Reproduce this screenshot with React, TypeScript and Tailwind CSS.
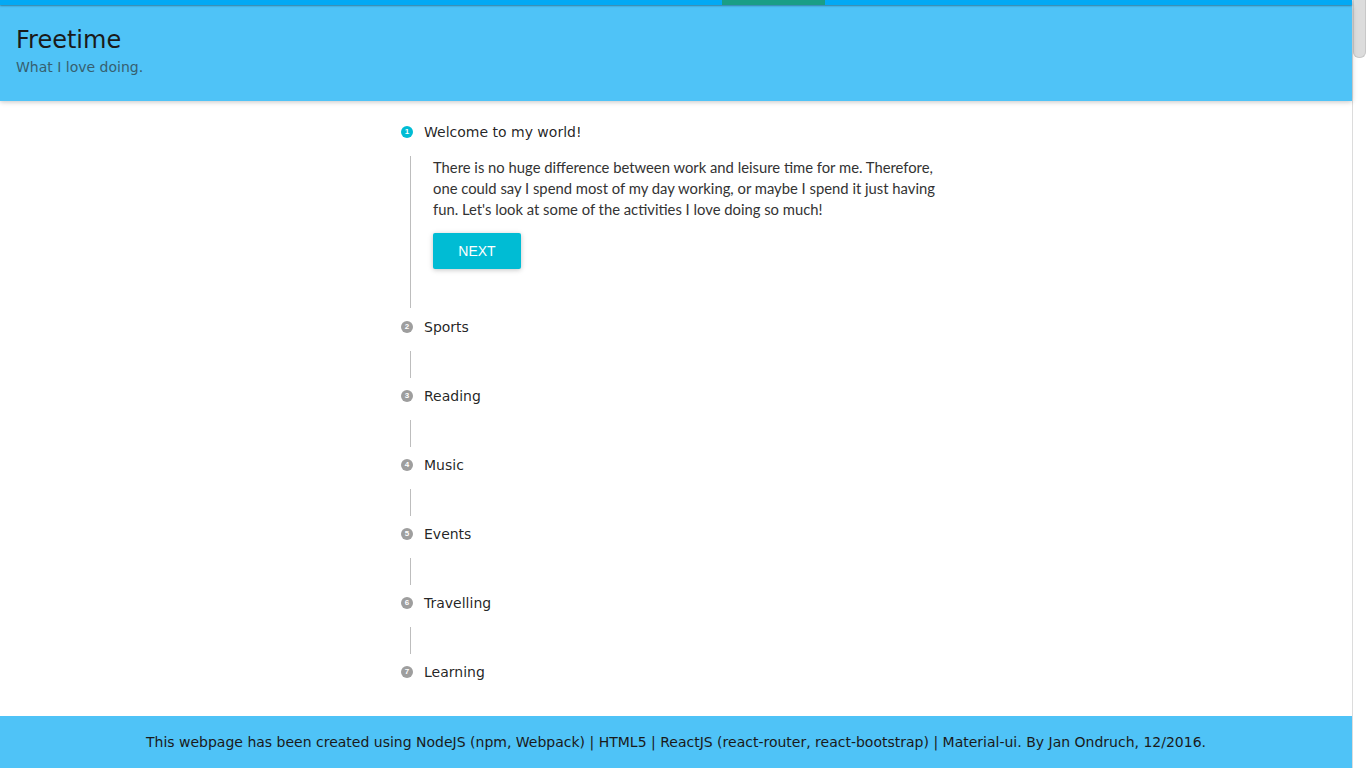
import React from "react";

const dejavu = { fontFamily: '"DejaVu Sans", sans-serif' };

function StepIcon({ n, active }: { n: number; active?: boolean }) {
  return (
    <div
      className={`flex h-[12px] w-[12px] shrink-0 items-center justify-center rounded-full text-[8px] font-bold leading-none text-white ${
        active ? "bg-[#00bcd4]" : "bg-[#9e9e9e]"
      }`}
      style={{ fontFamily: '"Liberation Sans", Arial, sans-serif' }}
    >
      {n}
    </div>
  );
}

function StepRow({ n, label, active }: { n: number; label: string; active?: boolean }) {
  return (
    <div className="flex h-[24px] items-center">
      <div className="ml-[11px] mr-[11px] flex shrink-0">
        <StepIcon n={n} active={active} />
      </div>
      <span className="text-[14px] text-[rgba(0,0,0,0.87)]" style={dejavu}>
        {label}
      </span>
    </div>
  );
}

function Connector() {
  return <div className="ml-[20px] mt-[12px] mb-[6px] h-[27px] w-px bg-[#bdbdbd]" />;
}

export default function App() {
  const steps = ["Sports", "Reading", "Music", "Events", "Travelling", "Learning"];
  return (
    <div className="flex h-screen overflow-hidden bg-white">
      <div className="min-w-0 flex-1">
        <div className="relative z-10 flex h-[5px] bg-[#03a9f4] shadow-[0_1px_2px_rgba(0,0,0,0.35)]">
          <div className="w-[722px]" />
          <div className="w-[103px] bg-[#1a9e86]" />
        </div>
        <header className="relative bg-[#4fc3f7] px-4 pt-[21px] pb-[24px] shadow-[0_1px_6px_rgba(0,0,0,0.12),0_1px_4px_rgba(0,0,0,0.12)]">
          <h1 className="text-[24px] leading-[28px] text-[#1a1a1a]" style={dejavu}>
            Freetime
          </h1>
          <p className="mt-[3px] text-[14px] leading-[20px] text-[#37606f]" style={dejavu}>
            What I love doing.
          </p>
        </header>

        <main className="mx-auto w-[572px] pt-[19px] pb-[32px]">
          <StepRow n={1} label="Welcome to my world!" active />
          <div className="ml-[20px] mt-[12px] mb-[7px] border-l border-[#bdbdbd] pl-[22px] pb-[39px]">
            <p
              className="w-[508px] pt-[1px] text-[14.8px] leading-[21px] text-[#333]"
              style={{ fontFamily: 'Lato, "Liberation Sans", sans-serif' }}
            >
              There is no huge difference between work and leisure time for me. Therefore, one could say I spend most of my day working, or maybe I spend it just having fun. Let's look at some of the activities I love doing so much!
            </p>
            <button
              className="mt-[13px] h-[36px] min-w-[88px] rounded-[2px] bg-[#00bcd4] px-4 text-[14px] text-white shadow-[0_1px_6px_rgba(0,0,0,0.12),0_1px_4px_rgba(0,0,0,0.12)]"
              style={{ fontFamily: '"Liberation Sans", Arial, sans-serif' }}
            >
              NEXT
            </button>
          </div>
          {steps.map((s, i) => (
            <React.Fragment key={s}>
              <StepRow n={i + 2} label={s} />
              {i < steps.length - 1 && <Connector />}
            </React.Fragment>
          ))}
        </main>

        <footer className="bg-[#4fc3f7] pt-[16px] pb-[40px] text-center">
          <p className="text-[14px] leading-[20px] text-[#1a1a1a]" style={dejavu}>
            This webpage has been created using NodeJS (npm, Webpack) | HTML5 | ReactJS (react-router, react-bootstrap) | Material-ui. By Jan Ondruch, 12/2016.
          </p>
        </footer>
      </div>
      <div className="flex w-[14px] shrink-0 flex-col border-l border-[#dcdcdc] bg-white">
        <div className="h-[58px] rounded-b-[6px] border border-t-0 border-[#c8c8c8] bg-[#dcdcdc]" />
      </div>
    </div>
  );
}
